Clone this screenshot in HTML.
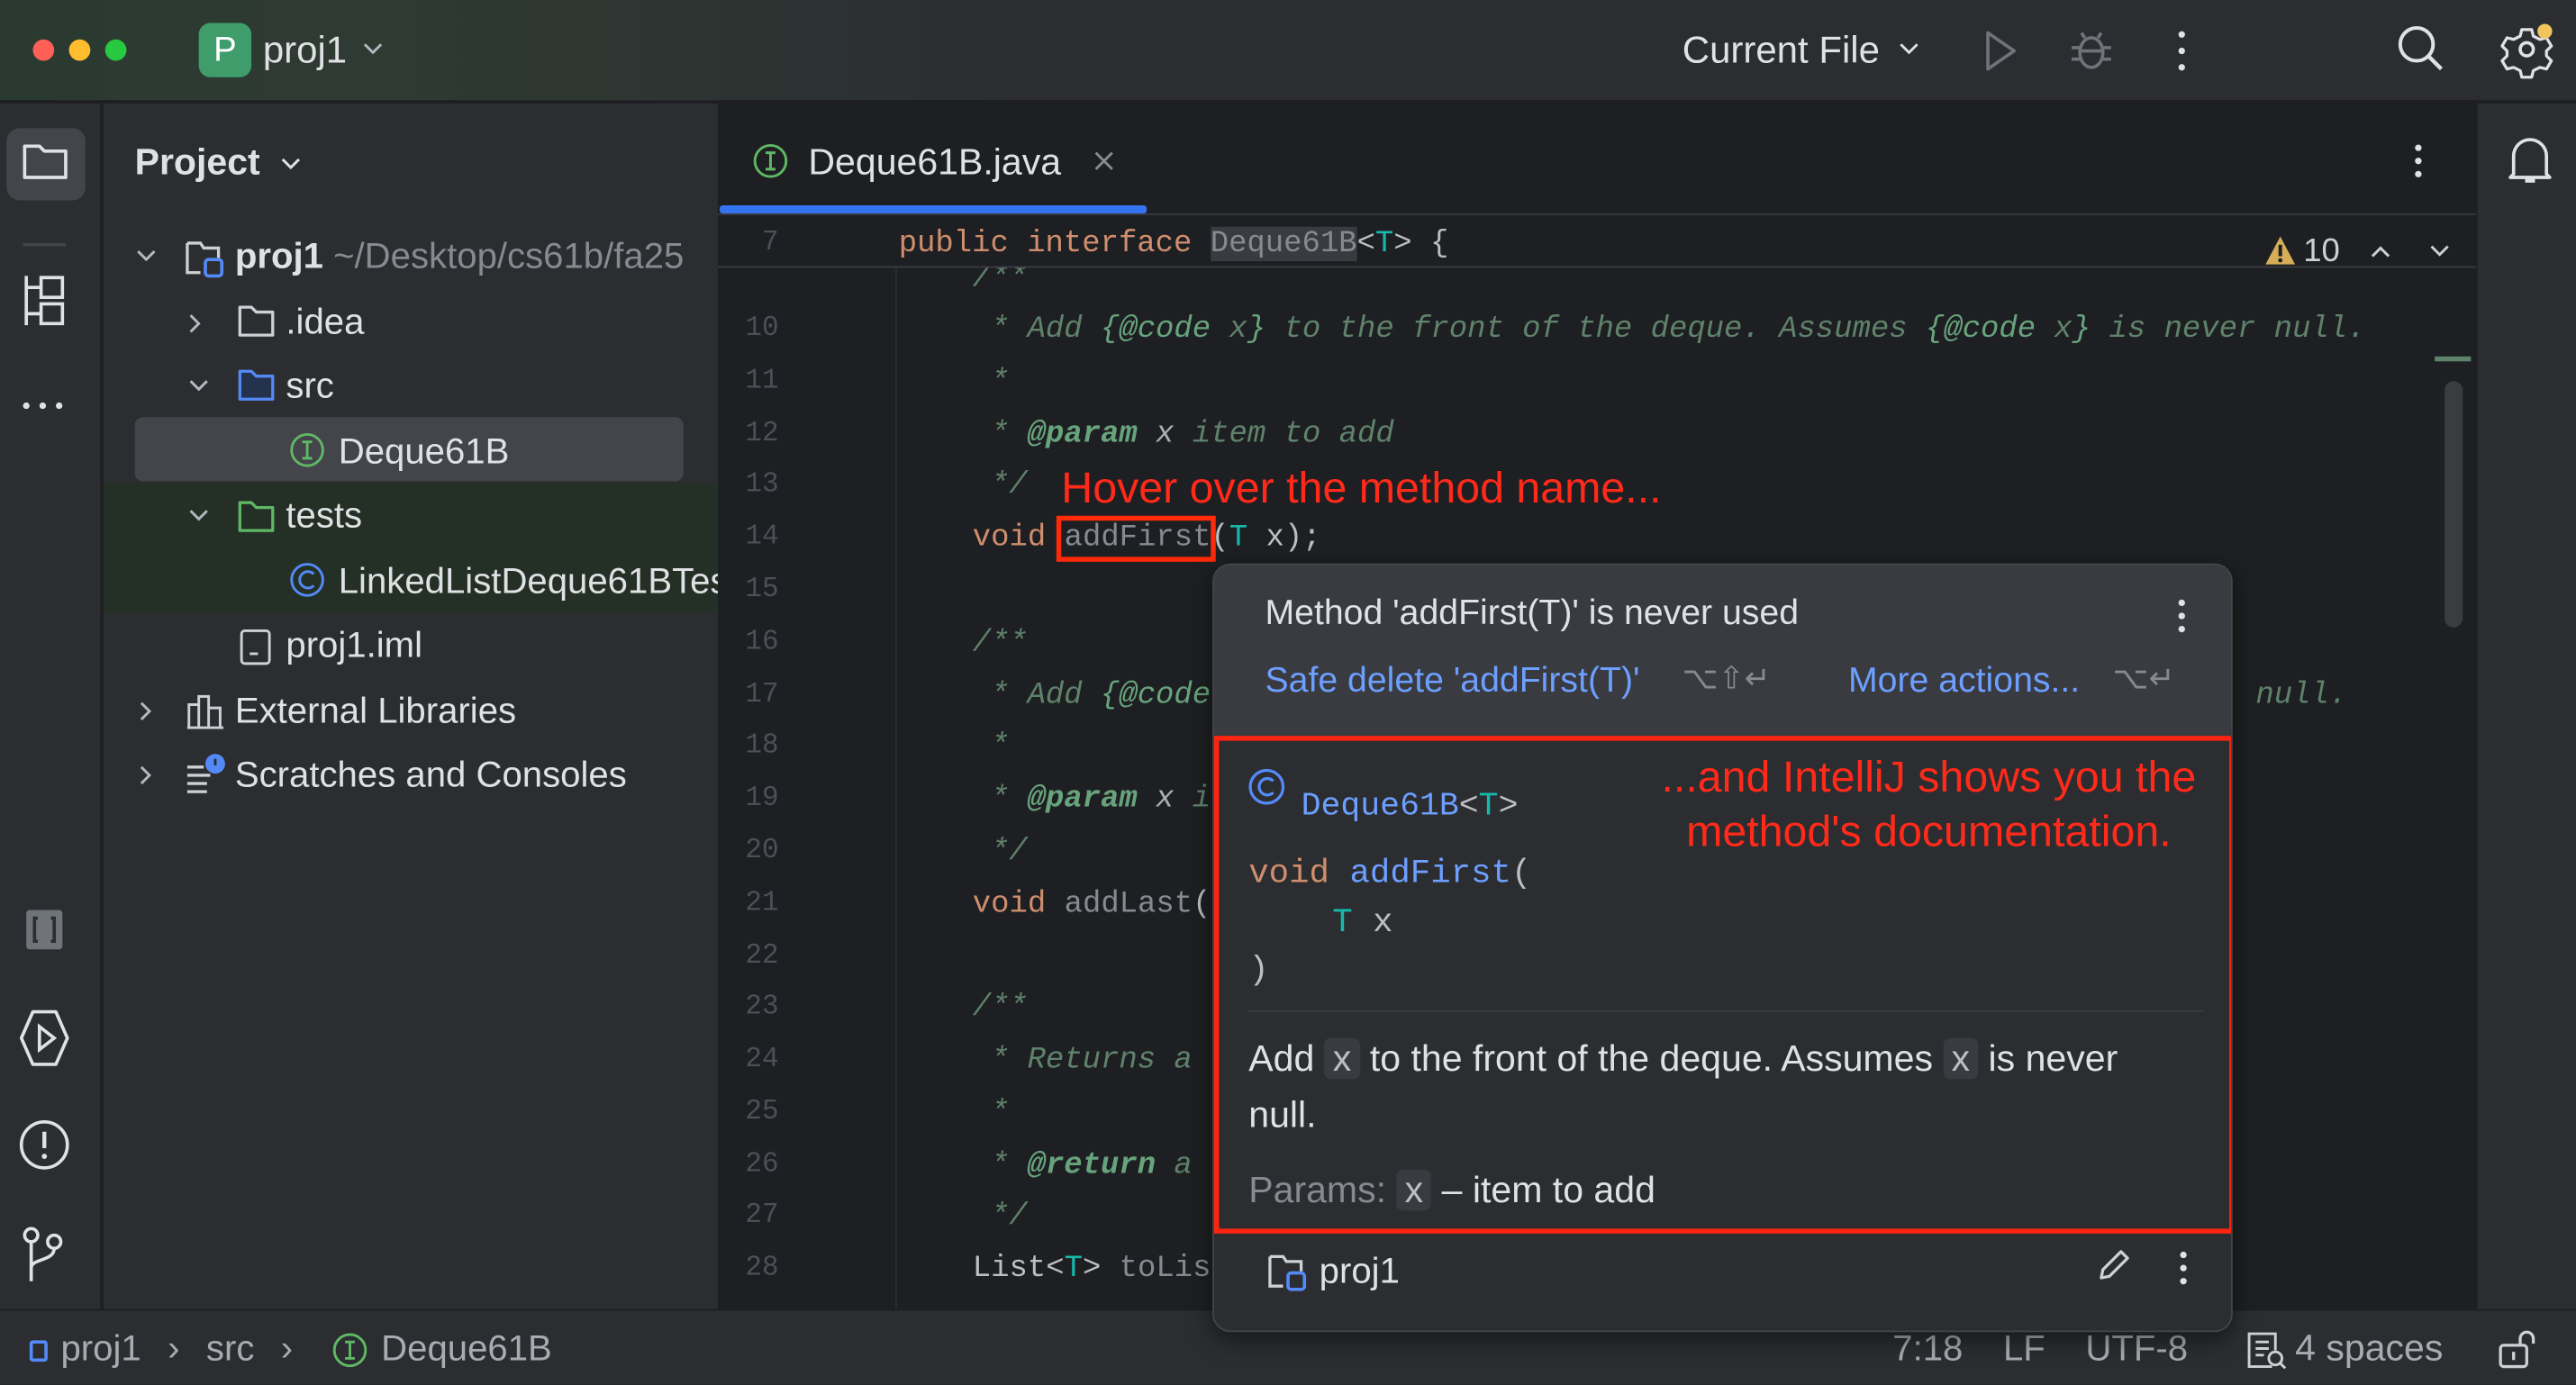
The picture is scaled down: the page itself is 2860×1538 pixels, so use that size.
<!DOCTYPE html>
<html><head><meta charset="utf-8">
<style>
*{margin:0;padding:0;box-sizing:border-box}
html,body{width:2860px;height:1538px;overflow:hidden;background:#1e1f22}
#w{position:absolute;left:0;top:0;width:1568px;height:843px;transform:scale(1.824);transform-origin:0 0;font-family:"Liberation Sans",sans-serif;color:#dfe1e5;background:#1e1f22}
.a{position:absolute;white-space:nowrap}
.m{font-family:"Liberation Mono",monospace;font-size:18.6px}
.c{color:#5f826b;font-style:italic}
.t{color:#67a37c;font-style:italic}
.k{color:#cf8e6d}
.tp{color:#16baac}
.ln{position:absolute;left:440px;width:34px;text-align:right;color:#4b5059;font-family:"Liberation Mono",monospace;font-size:17px}
.tree{font-size:22px;color:#dfe1e5}
svg{position:absolute;overflow:visible}
</style></head><body><div id="w">
<!-- title bar -->
<div class="a" style="left:0;top:0;width:1568px;height:62px;background:linear-gradient(90deg,#2a3a30 0%,#2f3a33 15%,#2b2d30 40%);border-bottom:1px solid #1e1f22"></div>
<div class="a" style="left:20px;top:24px;width:13px;height:13px;border-radius:50%;background:#fe5f57"></div>
<div class="a" style="left:42px;top:24px;width:13px;height:13px;border-radius:50%;background:#febc2e"></div>
<div class="a" style="left:64px;top:24px;width:13px;height:13px;border-radius:50%;background:#28c840"></div>
<div class="a" style="left:121px;top:14px;width:32px;height:33px;border-radius:7px;background:#3f9d6c;color:#fff;font-size:21px;text-align:center;line-height:33px">P</div>
<div class="a" style="left:160px;top:17px;font-size:23px">proj1</div>
<svg style="left:220px;top:25px" width="14" height="10"><path d="M2 2l5 5 5-5" stroke="#b4b8bf" stroke-width="1.6" fill="none"/></svg>
<div class="a" style="left:1024px;top:17px;font-size:23px">Current File</div>
<svg style="left:1155px;top:25px" width="14" height="10"><path d="M2 2l5 5 5-5" stroke="#dfe1e5" stroke-width="1.6" fill="none"/></svg>
<svg style="left:1207px;top:18px" width="22" height="26"><path d="M3 2v22l16-11z" stroke="#6f737a" stroke-width="2" fill="none" stroke-linejoin="round"/></svg>
<svg style="left:1260px;top:17px" width="26" height="28"><ellipse cx="13" cy="15" rx="7" ry="9" stroke="#6f737a" stroke-width="2" fill="none"/><path d="M6 12H1M6 19H1M20 12h5M20 19h5M9 6l-2-3M17 6l2-3M6 14h14" stroke="#6f737a" stroke-width="2"/></svg>
<div class="a" style="left:1326px;top:19px;width:4px;height:4px;border-radius:2px;background:#dfe1e5;box-shadow:0 10px #dfe1e5,0 20px #dfe1e5"></div>
<svg style="left:1459px;top:15px" width="30" height="30"><circle cx="12" cy="12" r="10" stroke="#dfe1e5" stroke-width="2.2" fill="none"/><path d="M19 19l8 8" stroke="#dfe1e5" stroke-width="2.4"/></svg>
<svg style="left:1523px;top:14px" width="32" height="32"><circle cx="15" cy="16" r="4" stroke="#dfe1e5" stroke-width="2" fill="none"/><path d="M12 4h6l1 4 4 2 4-1 3 5-3 3v3l3 3-3 5-4-1-4 2-1 4h-6l-1-4-4-2-4 1-3-5 3-3v-3l-3-3 3-5 4 1 4-2z" stroke="#dfe1e5" stroke-width="1.8" fill="none" stroke-linejoin="round"/><circle cx="26" cy="5" r="4.5" fill="#f2c55c"/></svg>
<!-- left strip -->
<div class="a" style="left:0;top:63px;width:62px;height:734px;background:#2b2d30;border-right:1px solid #1e1f22"></div>
<div class="a" style="left:4px;top:78px;width:48px;height:44px;border-radius:8px;background:#43454a"></div>
<svg style="left:13px;top:86px" width="30" height="24"><path d="M2 3h9l3 3h13v16H2z" stroke="#dfe1e5" stroke-width="2" fill="none" stroke-linejoin="round"/></svg>
<div class="a" style="left:14px;top:148px;width:26px;height:2px;background:#43454a"></div>
<svg style="left:13px;top:166px" width="28" height="34"><path d="M3 2v30M3 9h9M3 25h9M12 3h13v12H12zM12 19h13v12H12z" stroke="#dfe1e5" stroke-width="2" fill="none"/></svg>
<div class="a" style="left:14px;top:245px;width:4px;height:4px;border-radius:2px;background:#dfe1e5;box-shadow:10px 0 #dfe1e5,20px 0 #dfe1e5"></div>
<svg style="left:14px;top:552px" width="26" height="28"><rect x="2" y="2" width="22" height="24" rx="2" fill="#6f737a"/><path d="M9 7h-2v14h2M17 7h2v14h-2" stroke="#2b2d30" stroke-width="2" fill="none"/></svg>
<svg style="left:10px;top:613px" width="34" height="38"><path d="M10 3h14l7 16-7 16H10L3 19z" stroke="#dfe1e5" stroke-width="2" fill="none" stroke-linejoin="round"/><path d="M14 12v14l9-7z" stroke="#dfe1e5" stroke-width="2" fill="none"/></svg>
<svg style="left:10px;top:680px" width="34" height="34"><circle cx="17" cy="17" r="14" stroke="#dfe1e5" stroke-width="2" fill="none"/><path d="M17 9v10" stroke="#dfe1e5" stroke-width="2.4"/><circle cx="17" cy="24" r="1.6" fill="#dfe1e5"/></svg>
<svg style="left:12px;top:746px" width="30" height="36"><circle cx="7" cy="6" r="4" stroke="#dfe1e5" stroke-width="2" fill="none"/><circle cx="21" cy="10" r="4" stroke="#dfe1e5" stroke-width="2" fill="none"/><path d="M7 10v24M21 14c0 8-14 6-14 12" stroke="#dfe1e5" stroke-width="2" fill="none"/></svg>
<!-- project panel -->
<div class="a" style="left:63px;top:63px;width:374px;height:734px;background:#2b2d30"></div>
<div class="a" style="left:82px;top:86px;font-size:22.5px;font-weight:bold">Project</div>
<svg style="left:170px;top:95px" width="14" height="10"><path d="M2 2l5 5 5-5" stroke="#dfe1e5" stroke-width="1.6" fill="none"/></svg>
<div class="a" style="left:82px;top:254px;width:334px;height:39px;border-radius:5px;background:#43454a"></div>
<div class="a" style="left:63px;top:294px;width:374px;height:79px;background:#243025"></div>
<svg style="left:82px;top:151px" width="14" height="10"><path d="M2 2l5 5 5-5" stroke="#b4b8bf" stroke-width="1.6" fill="none"/></svg>
<svg style="left:112px;top:145px" width="26" height="26"><path d="M2 3h8l2 3h9v6M2 3v18h8" stroke="#ced0d6" stroke-width="1.8" fill="none"/><rect x="13" y="13" width="10" height="10" rx="2" stroke="#548af7" stroke-width="2" fill="none"/></svg>
<div class="a tree" style="left:143px;top:143px;font-weight:bold;width:294px;overflow:hidden">proj1 <span style="font-weight:normal;color:#868a91">~/Desktop/cs61b/fa25</span></div>
<svg style="left:114px;top:190px" width="10" height="14"><path d="M2 2l5 5-5 5" stroke="#b4b8bf" stroke-width="1.6" fill="none"/></svg>
<svg style="left:144px;top:184px" width="24" height="22"><path d="M2 3h7l3 3h10v14H2z" stroke="#ced0d6" stroke-width="1.8" fill="none" stroke-linejoin="round"/></svg>
<div class="a tree" style="left:174px;top:183px">.idea</div>
<svg style="left:114px;top:230px" width="14" height="10"><path d="M2 2l5 5 5-5" stroke="#b4b8bf" stroke-width="1.6" fill="none"/></svg>
<svg style="left:144px;top:223px" width="24" height="22"><path d="M2 3h7l3 3h10v14H2z" stroke="#548af7" fill="#25324d" stroke-width="1.8" stroke-linejoin="round"/></svg>
<div class="a tree" style="left:174px;top:222px">src</div>
<svg style="left:176px;top:263px" width="24" height="24"><circle cx="11" cy="11" r="9.5" stroke="#5fb865" stroke-width="1.6" fill="none"/><path d="M8 6h6M8 16h6M11 6v10" stroke="#5fb865" stroke-width="1.6"/></svg>
<div class="a tree" style="left:206px;top:262px">Deque61B</div>
<svg style="left:114px;top:309px" width="14" height="10"><path d="M2 2l5 5 5-5" stroke="#b4b8bf" stroke-width="1.6" fill="none"/></svg>
<svg style="left:144px;top:303px" width="24" height="22"><path d="M2 3h7l3 3h10v14H2z" stroke="#5fb865" stroke-width="1.8" fill="none" stroke-linejoin="round"/></svg>
<div class="a tree" style="left:174px;top:301px">tests</div>
<svg style="left:176px;top:342px" width="24" height="24"><circle cx="11" cy="11" r="9.5" stroke="#548af7" stroke-width="1.6" fill="none"/><path d="M15 7.5a5 5 0 1 0 0 7" stroke="#548af7" stroke-width="1.6" fill="none"/></svg>
<div class="a tree" style="left:206px;top:341px;width:231px;overflow:hidden">LinkedListDeque61BTest</div>
<svg style="left:145px;top:382px" width="22" height="24"><rect x="2" y="2" width="17" height="20" rx="2" stroke="#ced0d6" stroke-width="1.6" fill="none"/><path d="M7 16h5" stroke="#ced0d6" stroke-width="1.6"/></svg>
<div class="a tree" style="left:174px;top:380px">proj1.iml</div>
<svg style="left:84px;top:426px" width="10" height="14"><path d="M2 2l5 5-5 5" stroke="#b4b8bf" stroke-width="1.6" fill="none"/></svg>
<svg style="left:113px;top:421px" width="26" height="24"><path d="M2 22V8h6v14M8 22V3h6v19M14 22V10h7v12zM1 22h22" stroke="#ced0d6" stroke-width="1.6" fill="none"/></svg>
<div class="a tree" style="left:143px;top:420px">External Libraries</div>
<svg style="left:84px;top:465px" width="10" height="14"><path d="M2 2l5 5-5 5" stroke="#b4b8bf" stroke-width="1.6" fill="none"/></svg>
<svg style="left:112px;top:458px" width="28" height="26"><path d="M2 9h10M2 14h14M2 19h12M2 24h12" stroke="#ced0d6" stroke-width="1.8"/><circle cx="19" cy="7" r="6" fill="#548af7"/><path d="M19 4v4" stroke="#2b2d30" stroke-width="1.6"/></svg>
<div class="a tree" style="left:143px;top:459px">Scratches and Consoles</div>
<!-- editor -->
<div class="a" style="left:437px;top:63px;width:1070px;height:734px;background:#1e1f22"></div>
<svg style="left:458px;top:87px" width="24" height="24"><circle cx="11" cy="11" r="9.5" stroke="#5fb865" stroke-width="1.6" fill="none"/><path d="M8 6h6M8 16h6M11 6v10" stroke="#5fb865" stroke-width="1.6"/></svg>
<div class="a" style="left:492px;top:86px;font-size:22.5px">Deque61B.java</div>
<svg style="left:665px;top:91px" width="14" height="14"><path d="M2 2l10 10M12 2L2 12" stroke="#868a91" stroke-width="1.6"/></svg>
<div class="a" style="left:1470px;top:88px;width:4px;height:4px;border-radius:2px;background:#dfe1e5;box-shadow:0 8px #dfe1e5,0 16px #dfe1e5"></div>
<div class="a" style="left:438px;top:125px;width:260px;height:5px;background:#3574f0;border-radius:2px"></div>
<div class="a" style="left:437px;top:130px;width:1070px;height:1px;background:#393b40"></div>
<div class="a" style="left:545px;top:163px;width:1px;height:634px;background:#2b2d30"></div>
<!-- sticky -->
<div class="a" style="left:437px;top:131px;width:1070px;height:32px;background:#1e1f22;border-bottom:1px solid #393b40;z-index:2"></div>
<div class="a ln" style="top:139px;z-index:3">7</div>
<div class="a m" style="left:547px;top:138px;z-index:3"><span class="k">public interface </span><span style="background:#393b40;color:#868a91">Deque61B</span><span style="color:#bcbec4">&lt;</span><span class="tp">T</span><span style="color:#bcbec4">&gt; {</span></div>
<svg style="left:1378px;top:143px;z-index:3" width="20" height="20"><path d="M10 1L19 18H1z" fill="#d6ae58"/><path d="M10 6v7" stroke="#1e1f22" stroke-width="2.2"/><circle cx="10" cy="15.5" r="1.3" fill="#1e1f22"/></svg>
<div class="a" style="left:1402px;top:142px;font-size:20px;color:#ced0d6;z-index:3">10</div>
<svg style="left:1442px;top:148px;z-index:3" width="14" height="10"><path d="M2 8l5-5 5 5" stroke="#ced0d6" stroke-width="1.6" fill="none"/></svg>
<svg style="left:1478px;top:148px;z-index:3" width="14" height="10"><path d="M2 2l5 5 5-5" stroke="#ced0d6" stroke-width="1.6" fill="none"/></svg>
<!-- code lines -->
<div class="a m c" style="left:592px;top:159px">/**</div>
<div class="ln" style="top:191px">10</div><div class="a m c" style="left:603px;top:190px">* Add <span class="t">{@code</span> x<span class="t">}</span> to the front of the deque. Assumes <span class="t">{@code</span> x<span class="t">}</span> is never null.</div>
<div class="ln" style="top:223px">11</div><div class="a m c" style="left:603px;top:222px">*</div>
<div class="ln" style="top:255px">12</div><div class="a m c" style="left:603px;top:254px">* <span class="t" style="font-weight:bold">@param</span> <span style="color:#aab0ac">x</span> item to add</div>
<div class="ln" style="top:286px">13</div><div class="a m c" style="left:603px;top:285px">*/</div>
<div class="a" style="left:646px;top:282px;font-size:26.5px;color:#ff2a1a">Hover over the method name...</div>
<div class="ln" style="top:318px">14</div><div class="a m" style="left:592px;top:317px;color:#bcbec4"><span class="k">void</span> <span style="color:#868a91">addFirst</span>(<span class="tp">T</span> x);</div>
<div class="a" style="left:643px;top:314px;width:97px;height:28px;border:3px solid #ff2a0a"></div>
<div class="ln" style="top:350px">15</div>
<div class="ln" style="top:382px">16</div><div class="a m c" style="left:592px;top:381px">/**</div>
<div class="ln" style="top:414px">17</div><div class="a m c" style="left:603px;top:413px">* Add <span class="t">{@code</span></div>
<div class="a m c" style="left:1373px;top:413px">null.</div>
<div class="ln" style="top:445px">18</div><div class="a m c" style="left:603px;top:444px">*</div>
<div class="ln" style="top:477px">19</div><div class="a m c" style="left:603px;top:476px">* <span class="t" style="font-weight:bold">@param</span> <span style="color:#aab0ac">x</span> i</div>
<div class="ln" style="top:509px">20</div><div class="a m c" style="left:603px;top:508px">*/</div>
<div class="ln" style="top:541px">21</div><div class="a m" style="left:592px;top:540px;color:#bcbec4"><span class="k">void</span> <span style="color:#868a91">addLast</span>(</div>
<div class="ln" style="top:573px">22</div>
<div class="ln" style="top:604px">23</div><div class="a m c" style="left:592px;top:603px">/**</div>
<div class="ln" style="top:636px">24</div><div class="a m c" style="left:603px;top:635px">* Returns a</div>
<div class="ln" style="top:668px">25</div><div class="a m c" style="left:603px;top:667px">*</div>
<div class="ln" style="top:700px">26</div><div class="a m c" style="left:603px;top:699px">* <span class="t" style="font-weight:bold">@return</span> a</div>
<div class="ln" style="top:731px">27</div><div class="a m c" style="left:603px;top:730px">*/</div>
<div class="ln" style="top:763px">28</div><div class="a m" style="left:592px;top:762px;color:#bcbec4">List&lt;<span class="tp">T</span>&gt; <span style="color:#868a91">toLis</span></div>
<div class="a" style="left:1482px;top:217px;width:22px;height:3px;background:#5f826b"></div>
<div class="a" style="left:1488px;top:232px;width:11px;height:150px;border-radius:6px;background:#3a3c40"></div>
<!-- right strip -->
<div class="a" style="left:1507px;top:63px;width:61px;height:734px;background:#2b2d30;border-left:1px solid #1e1f22"></div>
<svg style="left:1525px;top:82px" width="30" height="32"><path d="M5 24V13a10 10 0 0 1 20 0v11l2 2H3z" stroke="#dfe1e5" stroke-width="2" fill="none" stroke-linejoin="round"/><path d="M12 28h6" stroke="#dfe1e5" stroke-width="2.4"/></svg>
<!-- status bar -->
<div class="a" style="left:0;top:797px;width:1568px;height:46px;background:#2b2d30;border-top:1px solid #1e1f22"></div>
<div class="a" style="left:18px;top:816px;width:11px;height:13px;border:2px solid #548af7;border-radius:2px"></div>
<div class="a" style="left:37px;top:808px;font-size:22px;color:#a8abb1">proj1 <span style="margin:0 10px">›</span> src <span style="margin:0 10px">›</span></div>
<svg style="left:202px;top:811px" width="24" height="24"><circle cx="11" cy="11" r="9.5" stroke="#5fb865" stroke-width="1.6" fill="none"/><path d="M8 6h6M8 16h6M11 6v10" stroke="#5fb865" stroke-width="1.6"/></svg>
<div class="a" style="left:232px;top:808px;font-size:22px;color:#a8abb1">Deque61B</div>
<div class="a" style="left:1152px;top:808px;font-size:22px;color:#a8abb1">7:18&nbsp;&nbsp;&nbsp;&nbsp;LF&nbsp;&nbsp;&nbsp;&nbsp;UTF-8</div>
<svg style="left:1367px;top:810px" width="26" height="26"><path d="M16 22H2V2h16v10M6 7h8M6 11h8M6 15h5" stroke="#ced0d6" stroke-width="1.6" fill="none"/><circle cx="18" cy="17" r="4" stroke="#ced0d6" stroke-width="1.6" fill="none"/><path d="M21 20l3 3" stroke="#ced0d6" stroke-width="1.6"/></svg>
<div class="a" style="left:1397px;top:808px;font-size:22.5px;color:#a8abb1">4 spaces</div>
<svg style="left:1520px;top:809px" width="28" height="26"><rect x="2" y="10" width="16" height="13" rx="2" stroke="#ced0d6" stroke-width="1.8" fill="none"/><path d="M14 10V6a4 4 0 0 1 8 0v3M10 14v5" stroke="#ced0d6" stroke-width="1.8" fill="none"/></svg>
<!-- popup -->
<div class="a" style="left:738px;top:343px;width:621px;height:468px;background:#2b2d30;border:1px solid #43454a;border-radius:11px;box-shadow:0 4px 14px rgba(0,0,0,.5);overflow:hidden;z-index:5">
  <div class="a" style="left:0;top:0;width:621px;height:104px;background:#393b40"></div>
  <div class="a" style="left:31px;top:17px;font-size:21.5px;color:#dfe1e5">Method 'addFirst(T)' is never used</div>
  <div class="a" style="left:587px;top:21px;width:4px;height:4px;border-radius:2px;background:#dfe1e5;box-shadow:0 8px #dfe1e5,0 16px #dfe1e5"></div>
  <div class="a" style="left:31px;top:58px;font-size:21.5px;color:#6d9fff">Safe delete 'addFirst(T)'</div>
  <div class="a" style="left:285px;top:58px;font-size:19px;color:#868a91">⌥⇧↵</div>
  <div class="a" style="left:386px;top:58px;font-size:21.5px;color:#6d9fff">More actions...</div>
  <div class="a" style="left:547px;top:58px;font-size:19px;color:#868a91">⌥↵</div>
  <div class="a" style="left:0;top:104px;width:621px;height:303px;border:3px solid #ff2410"></div>
  <svg style="left:21px;top:124px" width="24" height="24"><circle cx="11" cy="11" r="10" stroke="#548af7" stroke-width="1.8" fill="none"/><path d="M15 7.5a5 5 0 1 0 0 7" stroke="#548af7" stroke-width="1.8" fill="none"/></svg>
  <div class="a m" style="left:53px;top:136px;color:#6d9fff;font-size:20px">Deque61B<span style="color:#bcbec4">&lt;</span><span class="tp">T</span><span style="color:#bcbec4">&gt;</span></div>
  <div class="a" style="left:260px;top:113px;width:350px;text-align:center;font-size:26.5px;line-height:33px;color:#ff2a1a;white-space:normal">...and IntelliJ shows you the method's documentation.</div>
  <div class="a m" style="left:21px;top:177px;font-size:20.5px;color:#bcbec4"><span class="k">void</span> <span style="color:#6d9fff">addFirst</span>(</div>
  <div class="a m" style="left:72px;top:207px;font-size:20.5px;color:#bcbec4"><span class="tp">T</span> x</div>
  <div class="a m" style="left:21px;top:236px;font-size:20.5px;color:#bcbec4">)</div>
  <div class="a" style="left:20px;top:271px;width:582px;height:1px;background:#393b40"></div>
  <div class="a" style="left:21px;top:284px;font-size:22.5px;color:#dfe1e5;line-height:34px;white-space:normal;width:565px">Add <span style="background:#393b40;border-radius:4px;padding:0 5px;color:#bcbec4">x</span> to the front of the deque. Assumes <span style="background:#393b40;border-radius:4px;padding:0 5px;color:#bcbec4">x</span> is never null.</div>
  <div class="a" style="left:21px;top:368px;font-size:22.5px;color:#868a91">Params: <span style="background:#393b40;border-radius:4px;padding:0 5px;color:#bcbec4">x</span> <span style="color:#dfe1e5">– item to add</span></div>
  <svg style="left:32px;top:418px" width="26" height="26"><path d="M2 3h8l2 3h9v6M2 3v18h8" stroke="#ced0d6" stroke-width="1.8" fill="none"/><rect x="13" y="13" width="10" height="10" rx="2" stroke="#548af7" stroke-width="2" fill="none"/></svg>
  <div class="a" style="left:64px;top:417px;font-size:22px;color:#dfe1e5">proj1</div>
  <svg style="left:536px;top:414px" width="24" height="24"><path d="M4 20l1-5L16 4l4 4L9 19z" stroke="#ced0d6" stroke-width="1.8" fill="none" stroke-linejoin="round"/></svg>
  <div class="a" style="left:588px;top:418px;width:4px;height:4px;border-radius:2px;background:#dfe1e5;box-shadow:0 8px #dfe1e5,0 16px #dfe1e5"></div>
</div>
</div></body></html>
